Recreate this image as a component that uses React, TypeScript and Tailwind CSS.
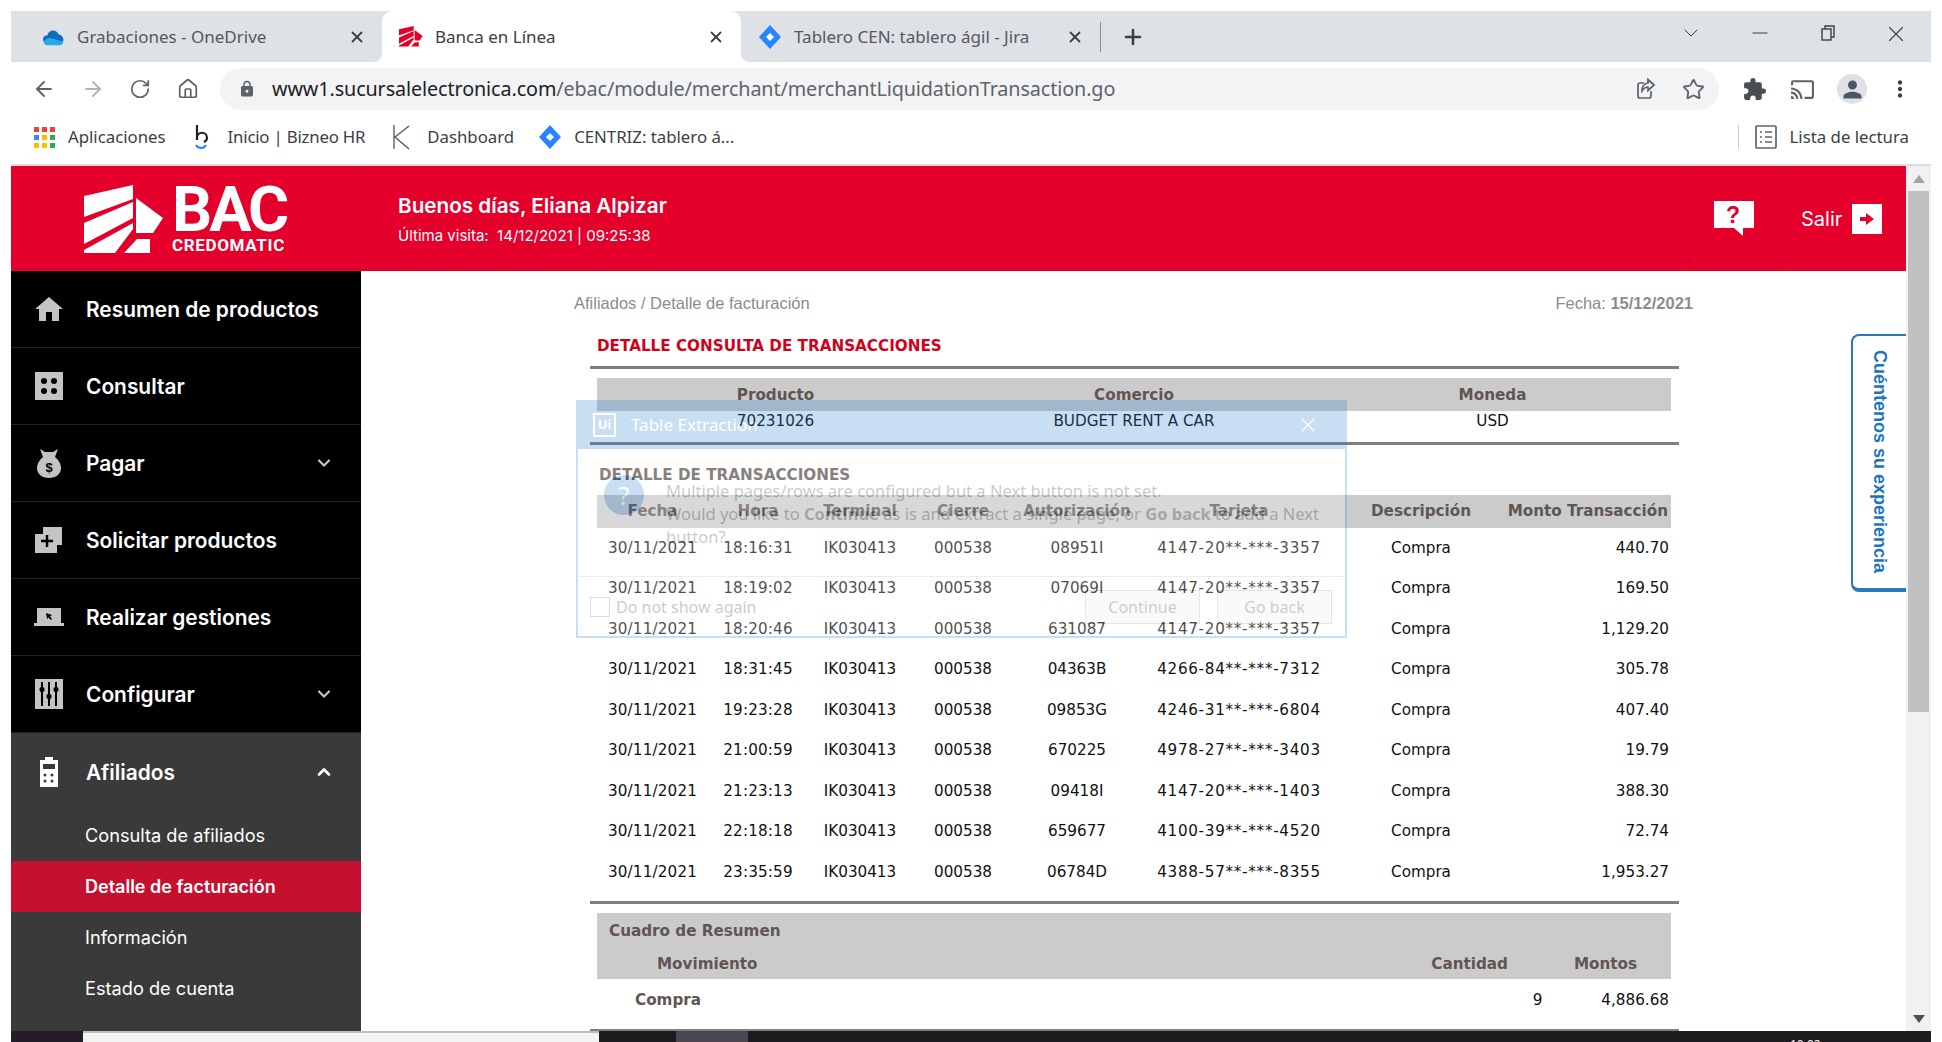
import { ArrowLeft, ArrowRight, ChevronDown, ChevronUp, Minus, Plus, RotateCw, Home, Star, X } from "lucide-react"
import { MdCast, MdExtension, MdLock, MdMoreVert, MdPerson } from "react-icons/md"
import type { ReactNode } from "react"

const transactions = [
  ["18:16:31", "08951I", "4147-20**-***-3357", "440.70"],
  ["18:19:02", "07069I", "4147-20**-***-3357", "169.50"],
  ["18:20:46", "631087", "4147-20**-***-3357", "1,129.20"],
  ["18:31:45", "04363B", "4266-84**-***-7312", "305.78"],
  ["19:23:28", "09853G", "4246-31**-***-6804", "407.40"],
  ["21:00:59", "670225", "4978-27**-***-3403", "19.79"],
  ["21:23:13", "09418I", "4147-20**-***-1403", "388.30"],
  ["22:18:18", "659677", "4100-39**-***-4520", "72.74"],
  ["23:35:59", "06784D", "4388-57**-***-8355", "1,953.27"],
]

const txGrid = "grid grid-cols-[111px_100px_104px_102px_126px_198px_166px_167px] w-[1074px]"

function JiraDiamond() {
  return (
    <svg width="24" height="24" viewBox="0 0 24 24">
      <path d="M12 0 23 12 12 24 1 12z" fill="#2684ff" />
      <path d="M12 8 16 12 12 16 8 12z" fill="#fff" />
    </svg>
  )
}

function BacMark({ size = 80, color = "#fff" }: { size?: number; color?: string }) {
  return (
    <svg width={size} height={size * 0.85} viewBox="0 0 80 68" fill={color}>
      <path d="M0 11 49 0V14L0 32z" />
      <path d="M0 38 49 17V33L0 59z" />
      <path d="M0 65 49 38V44L31 68H0z" />
      <path d="M52 13 79 33 69 48H52z" />
      <path d="M53 54H66V68H40z" />
    </svg>
  )
}

function Tab({ icon, title, width, pl, active }: { icon: ReactNode; title: string; width: string; pl: string; active?: boolean }) {
  return (
    <div className={`relative flex h-full items-center ${width} ${pl} pr-[16px] ${active ? "rounded-t-[10px] bg-white" : ""}`}>
      <span className="flex w-[24px] shrink-0 justify-center">{icon}</span>
      <span className={`ml-[12px] text-[17px] ${active ? "text-[#3c4043]" : "text-[#55585c]"}`}>{title}</span>
      <X className="ml-auto h-[18px] w-[18px] text-[#3c4043]" strokeWidth={2.4} />
      {active && (
        <>
          <span className="absolute bottom-0 left-[-8px] h-[8px] w-[8px] bg-white">
            <span className="block h-full w-full rounded-br-[8px] bg-[#dee1e6]" />
          </span>
          <span className="absolute bottom-0 right-[-8px] h-[8px] w-[8px] bg-white">
            <span className="block h-full w-full rounded-bl-[8px] bg-[#dee1e6]" />
          </span>
        </>
      )}
    </div>
  )
}

function TabStrip() {
  return (
    <div className="flex h-[51px] shrink-0 items-center bg-[#dee1e6] font-['Noto_Sans',sans-serif]">
      <Tab
        width="w-[371px]"
        pl="pl-[30px]"
        title="Grabaciones - OneDrive"
        icon={
          <svg width="26" height="24" viewBox="0 0 26 24">
            <path d="M3 17c-2-3 0-7 4-7 1-5 9-8 12-1 4 1 6 4 5 8z" fill="#0f6cbd" />
            <path d="M3 17c2-3 6-5 10-3l11 3c0 2-1 4-3 4H6c-2 0-3-2-3-4z" fill="#28a8ea" />
          </svg>
        }
      />
      <Tab width="w-[359px]" pl="pl-[17px]" title="Banca en Línea" active icon={<BacMark size={24} color="#e4002b" />} />
      <Tab width="w-[359px]" pl="pl-[17px]" title="Tablero CEN: tablero ágil - Jira" icon={<JiraDiamond />} />
      <div className="h-[30px] w-px bg-[#8a8d91]" />
      <Plus className="ml-[20px] h-[24px] w-[24px] text-[#3c4043]" strokeWidth={2.6} />
      <div className="ml-auto flex h-full items-start pt-[10px] text-[#3c4043]">
        <ChevronDown className="h-[24px] w-[24px]" strokeWidth={1} />
        <Minus className="ml-[45px] h-[24px] w-[24px]" strokeWidth={1.2} />
        <svg className="ml-[47px] mt-[3px]" width="18" height="18" viewBox="0 0 18 18" fill="none" stroke="currentColor" strokeWidth="1.4">
          <rect x="3" y="5" width="9" height="11" />
          <path d="M6 5V2h9v11h-3" />
        </svg>
        <X className="ml-[46px] mr-[22px] h-[26px] w-[26px]" strokeWidth={1} />
      </div>
    </div>
  )
}

function Toolbar() {
  return (
    <div className="flex h-[48px] shrink-0 items-center pt-[6px] font-['Noto_Sans',sans-serif] text-[#5f6368]">
      <ArrowLeft className="ml-[21px] h-[24px] w-[24px]" strokeWidth={1.8} />
      <ArrowRight className="ml-[25px] h-[24px] w-[24px] text-[#b0b3b7]" strokeWidth={1.8} />
      <RotateCw className="ml-[24px] h-[22px] w-[22px]" strokeWidth={1.9} />
      <Home className="ml-[26px] h-[22px] w-[22px]" strokeWidth={1.9} />
      <div className="ml-[21px] flex h-[42px] w-[1499px] items-center rounded-full bg-[#f1f3f4]">
        <MdLock className="ml-[18px] h-[18px] w-[18px]" />
        <span className="ml-[16px] text-[19.75px] tracking-[-0.1px]">
          <span className="text-[#202124]">www1.sucursalelectronica.com</span>/ebac/module/merchant/merchantLiquidationTransaction.go
        </span>
        <svg className="ml-auto" width="24" height="24" viewBox="0 0 24 24" fill="none" stroke="currentColor" strokeWidth="1.7">
          <path d="M17 14v5a2 2 0 0 1-2 2H6a2 2 0 0 1-2-2V8a2 2 0 0 1 2-2h4" />
          <path d="M20 8 14 2.5V6c-4 .5-6 3.5-6 8 2-3 3.500-4 6-4v3.500z" />
        </svg>
        <Star className="ml-[24px] mr-[14px] h-[23px] w-[23px]" strokeWidth={1.9} />
      </div>
      <MdExtension className="ml-[23px] h-[25px] w-[25px] text-[#4a4d51]" />
      <MdCast className="ml-[23px] h-[25px] w-[25px]" />
      <span className="ml-[22px] flex h-[30px] w-[30px] items-center justify-center rounded-full bg-[#dfe1e5]">
        <MdPerson className="h-[27px] w-[27px] text-[#4a5568]" />
      </span>
      <MdMoreVert className="ml-[20px] h-[26px] w-[26px] text-[#3c4043]" />
    </div>
  )
}

function BookmarksBar() {
  return (
    <div className="flex h-[54px] shrink-0 items-center font-['Noto_Sans',sans-serif] text-[16.8px] text-[#3c4043]">
      <svg className="ml-[23px]" width="21" height="21" viewBox="0 0 21 21">
        {["#ea4335", "#ea4335", "#ea4335", "#4285f4", "#fbbc04", "#34a853", "#fbbc04", "#fbbc04", "#34a853"].map((c, i) => (
          <rect key={i} x={(i % 3) * 8} y={Math.floor(i / 3) * 8} width="5" height="5" fill={c} />
        ))}
      </svg>
      <span className="ml-[13px]">Aplicaciones</span>
      <svg className="ml-[27px]" width="18" height="28" viewBox="0 0 18 28" fill="none">
        <path d="M4 2v15M4 15c0-7 10-7 10 0 0 2-1 3-3 4" stroke="#222" strokeWidth="2.200" />
        <path d="M3 22c2 4 8 4 10 0" stroke="#2684ff" strokeWidth="2" />
      </svg>
      <span className="ml-[17px] tracking-[-0.2px]">Inicio | Bizneo HR</span>
      <svg className="ml-[27px]" width="20" height="26" viewBox="0 0 20 26" fill="none" stroke="#555" strokeWidth="1.3">
        <path d="M2 1v24M17 2 3 13l14 12" />
      </svg>
      <span className="ml-[15px]">Dashboard</span>
      <span className="ml-[24px] flex">
        <JiraDiamond />
      </span>
      <span className="ml-[12px]">CENTRIZ: tablero á...</span>
      <div className="ml-auto h-[24px] w-px bg-[#c8cacd]" />
      <svg className="ml-[16px]" width="22" height="24" viewBox="0 0 22 24" fill="none" stroke="#5f6368" strokeWidth="1.700">
        <rect x="1" y="1" width="20" height="22" rx="1" />
        <path d="M5 7h2M10 7h7M5 12h2M10 12h7M5 17h2M10 17h7" />
      </svg>
      <span className="ml-[13px] mr-[22px]">Lista de lectura</span>
    </div>
  )
}

function Logo() {
  return (
    <div className="flex items-center pl-[73px]">
      <BacMark size={80} />
      <div className="ml-[8px] flex w-[114px] flex-col font-['Roboto',sans-serif] font-bold text-white">
        <span className="h-[50px] text-[63px] leading-[50px] tracking-[-3px]">BAC</span>
        <span className="mt-[3px] text-[17px] leading-[14px] tracking-[0.65px]">CREDOMATIC</span>
      </div>
    </div>
  )
}

function Header() {
  return (
    <header className="flex h-[105px] shrink-0 items-stretch bg-[#e4002b] text-white">
      <div className="flex w-[350px] items-center border-r border-[#d00028]">
        <Logo />
      </div>
      <div className="flex flex-col pl-[37px] pt-[27px] font-['Inter',sans-serif]">
        <span className="text-[20.7px] font-semibold leading-[26px]">Buenos días, Eliana Alpizar</span>
        <span className="mt-[7px] text-[15px] leading-[19px]">Última visita:&nbsp; 14/12/2021 | 09:25:38</span>
      </div>
      <div className="ml-auto flex w-[90px] items-center justify-center border-x border-[#d00028]">
        <svg width="40" height="35" viewBox="0 0 40 35">
          <path d="M0 0H40V27H29V35L20 27H0z" fill="#fff" />
          <text x="19" y="22" textAnchor="middle" fontFamily="Liberation Sans" fontWeight="700" fontSize="23" fill="#e4002b">?</text>
        </svg>
      </div>
      <div className="flex w-[127px] items-center pl-[22px] pt-[1px]">
        <span className="font-['Inter',sans-serif] text-[20px]">Salir</span>
        <span className="ml-[10px] flex h-[30px] w-[30px] items-center justify-center bg-white">
          <svg width="14" height="14" viewBox="0 0 14 14" fill="#e4002b">
            <path d="M0 5h6V1l8 6-8 6V9H0z" />
          </svg>
        </span>
      </div>
    </header>
  )
}

const c = "#c4c4c4"

const navItems: { label: string; icon: ReactNode; chevron?: boolean }[] = [
  {
    label: "Resumen de productos",
    icon: (
      <svg width="28" height="24" viewBox="0 0 28 24" fill={c}>
        <path d="M14 0 28 12H24V24H17V15H11V24H4V12H0z" />
      </svg>
    ),
  },
  {
    label: "Consultar",
    icon: (
      <svg width="28" height="28" viewBox="0 0 28 28">
        <rect width="28" height="28" fill={c} />
        <circle cx="9" cy="9" r="3" fill="#000" />
        <circle cx="19" cy="9" r="3" fill="#000" />
        <circle cx="9" cy="19" r="3" fill="#000" />
        <circle cx="19" cy="19" r="3" fill="#000" />
      </svg>
    ),
  },
  {
    label: "Pagar",
    chevron: true,
    icon: (
      <svg width="24" height="29" viewBox="0 0 24 29">
        <path d="M3 0 8 3H16L21 0 18 8C22 11 24 15 24 19 24 25 19 29 12 29 5 29 0 25 0 19 0 15 2 11 6 8z" fill={c} />
        <text x="12" y="23" textAnchor="middle" fontFamily="Liberation Sans" fontWeight="700" fontSize="13" fill="#000">$</text>
      </svg>
    ),
  },
  {
    label: "Solicitar productos",
    icon: (
      <svg width="28" height="26" viewBox="0 0 28 26">
        <path d="M8 0H27V18H22V26H0V7H8z" fill={c} />
        <path d="M12 8V20M6 14H18" stroke="#000" strokeWidth="2.500" />
      </svg>
    ),
  },
  {
    label: "Realizar gestiones",
    icon: (
      <svg width="30" height="18" viewBox="0 0 30 18">
        <path d="M3 0H27V15H30V18H0V15H3z" fill={c} />
        <path d="M12 5 18 7 16 8.500 18 11 17 12 14.500 9.500 13 11z" fill="#000" />
      </svg>
    ),
  },
  {
    label: "Configurar",
    chevron: true,
    icon: (
      <svg width="28" height="30" viewBox="0 0 28 30">
        <rect width="28" height="30" fill={c} />
        <path d="M7 3V27M14 3V27M21 3V27" stroke="#000" strokeWidth="2" />
        <rect x="4.500" y="8" width="5" height="5" rx="2" fill="#000" />
        <rect x="11.500" y="15" width="5" height="5" rx="2" fill="#000" />
        <rect x="18.500" y="8" width="5" height="5" rx="2" fill="#000" />
      </svg>
    ),
  },
]

function Sidebar() {
  return (
    <nav className="flex w-[350px] shrink-0 flex-col bg-[#3a3a3a] font-['Inter',sans-serif] shadow-[2px_0_4px_rgba(0,0,0,0.15)]">
      {navItems.map(({ label, icon, chevron }) => (
        <div key={label} className="flex h-[77px] items-center border-b border-[#222222] bg-black text-white">
          <span className="flex w-[75px] shrink-0 justify-center">{icon}</span>
          <span className="pt-[2px] text-[20.9px] font-semibold">{label}</span>
          {chevron && <ChevronDown className="ml-auto mr-[27px] h-[20px] w-[20px] text-[#c4c4c4]" strokeWidth={2.6} />}
        </div>
      ))}
      <div className="flex h-[77px] items-center text-white">
        <span className="flex w-[75px] shrink-0 justify-center">
          <svg width="20" height="30" viewBox="0 0 20 30" fill="#fff">
            <path d="M6 0H14V3H19V30H1V3H6z" />
            <rect x="4" y="7" width="12" height="5" fill="#3a3a3a" />
            <circle cx="6" cy="18" r="1.500" fill="#3a3a3a" />
            <circle cx="13" cy="18" r="1.500" fill="#3a3a3a" />
            <circle cx="6" cy="24" r="1.500" fill="#3a3a3a" />
            <circle cx="13" cy="24" r="1.500" fill="#3a3a3a" />
          </svg>
        </span>
        <span className="pt-[2px] text-[20.9px] font-semibold">Afiliados</span>
        <ChevronUp className="ml-auto mr-[27px] h-[20px] w-[20px]" strokeWidth={3.2} />
      </div>
      <div className="flex h-[51px] items-center pl-[74px] text-[18.2px] text-white">Consulta de afiliados</div>
      <div className="flex h-[51px] items-center bg-[#c5112f] pl-[74px] text-[18px] font-semibold text-white">Detalle de facturación</div>
      <div className="flex h-[51px] items-center pl-[74px] text-[18.2px] text-white">Información</div>
      <div className="flex h-[51px] items-center pl-[74px] text-[18.2px] text-white">Estado de cuenta</div>
    </nav>
  )
}

function Rule() {
  return <div className="h-[3px] w-[1089px] shrink-0 bg-[#7f7f7f]" />
}

function Report() {
  return (
    <div className="ml-[213px] flex w-[1119px] flex-col font-['DejaVu_Sans',sans-serif] text-[15.2px] text-[#111]">
      <div className="flex h-[64px] items-center justify-between pt-[1px] font-['Liberation_Sans',sans-serif] text-[16.5px] text-[#8c8c8c]">
        <span>Afiliados / Detalle de facturación</span>
        <span>
          Fecha: <b className="font-bold">15/12/2021</b>
        </span>
      </div>
      <div className="ml-[16px] flex flex-col">
        <h2 className="ml-[7px] h-[31px] pt-[1px] text-[15.2px] font-bold leading-[20px] text-[#d0021b]">DETALLE CONSULTA DE TRANSACCIONES</h2>
        <Rule />
        <div className="ml-[7px] mt-[9px] grid h-[33px] w-[1074px] grid-cols-[357px_360px_357px] items-center bg-[#cbcbcb] pt-[2px] text-center font-bold text-[#5f5652]">
          <span>Producto</span>
          <span>Comercio</span>
          <span>Moneda</span>
        </div>
        <div className="ml-[7px] grid h-[31px] w-[1074px] grid-cols-[357px_360px_357px] items-start pt-[1px] text-center leading-[19px]">
          <span>70231026</span>
          <span>BUDGET RENT A CAR</span>
          <span>USD</span>
        </div>
        <Rule />
        <h3 className="ml-[9px] mt-[21px] h-[29px] font-bold leading-[18px] text-[#5f5652]">DETALLE DE TRANSACCIONES</h3>
        <div className={`${txGrid} ml-[7px] h-[33px] items-center bg-[#cbcbcb] text-center font-bold text-[#5f5652]`}>
          <span>Fecha</span>
          <span>Hora</span>
          <span>Terminal</span>
          <span>Cierre</span>
          <span>Autorización</span>
          <span>Tarjeta</span>
          <span>Descripción</span>
          <span className="pr-[3px] text-right">Monto Transacción</span>
        </div>
        {transactions.map(([time, auth, card, amount]) => (
          <div key={time} className={`${txGrid} ml-[7px] h-[40.5px] items-center text-center`}>
            <span className="tracking-[0.15px]">30/11/2021</span>
            <span className="tracking-[0.15px]">{time}</span>
            <span>IK030413</span>
            <span>000538</span>
            <span>{auth}</span>
            <span className="tracking-[0.7px]">{card}</span>
            <span>Compra</span>
            <span className="pr-[2px] text-right">{amount}</span>
          </div>
        ))}
        <div className="mt-[8.5px]">
          <Rule />
        </div>
        <div className="ml-[7px] mt-[9px] flex h-[66px] w-[1074px] flex-col bg-[#cbcbcb] font-bold text-[#5f5652]">
          <span className="mt-[8px] pl-[12px] leading-[20px]">Cuadro de Resumen</span>
          <div className="mt-[13px] flex leading-[20px]">
            <span className="pl-[60px]">Movimiento</span>
            <span className="ml-auto">Cantidad</span>
            <span className="ml-[66px] mr-[34px]">Montos</span>
          </div>
        </div>
        <div className="ml-[7px] flex h-[50px] w-[1074px] items-center pb-[8px]">
          <span className="pl-[38px] font-bold text-[#5f5652]">Compra</span>
          <span className="ml-auto">9</span>
          <span className="ml-[59px] mr-[2px]">4,886.68</span>
        </div>
        <Rule />
      </div>
    </div>
  )
}

function TableExtractionDialog() {
  return (
    <div className="absolute left-[565px] top-[129px] flex h-[238px] w-[771px] flex-col border-[2px] border-t-0 border-[#277fcf] bg-white font-['Noto_Sans',sans-serif] text-[16px] text-[#333] opacity-25">
      <div className="flex h-[49px] shrink-0 items-center bg-[#277fcf] pl-[15px] pr-[25px] text-white">
        <span className="flex h-[24px] w-[23px] items-center justify-center border-[2px] border-white text-[13px] font-bold">Ui</span>
        <span className="ml-[15px] text-[17px]">Table Extraction</span>
        <X className="ml-auto h-[24px] w-[24px]" strokeWidth={1.3} />
      </div>
      <div className="flex h-[128px] shrink-0 items-start border-b border-[#bbb] pl-[26px] pt-[26px]">
        <span className="flex h-[40px] w-[40px] shrink-0 items-center justify-center rounded-full bg-[#277fcf] text-[26px] text-white">?</span>
        <p className="ml-[22px] mt-[4px] w-[680px] text-[16.5px] leading-[23px]">
          Multiple pages/rows are configured but a Next button is not set.
          <br />
          Would you like to <b>Continue</b> as is and extract a single page, or <b>Go back</b> to add a Next button?
        </p>
      </div>
      <div className="flex flex-1 items-center pl-[12px] pr-[13px]">
        <span className="h-[20px] w-[20px] border border-[#777]" />
        <span className="ml-[6px]">Do not show again</span>
        <span className="ml-auto flex h-[34px] w-[115px] items-center justify-center border border-[#999] bg-[#eee]">Continue</span>
        <span className="ml-[17px] flex h-[34px] w-[115px] items-center justify-center border border-[#999] bg-[#eee]">Go back</span>
      </div>
    </div>
  )
}

function FeedbackTab() {
  return (
    <div className="absolute right-0 top-[63px] flex h-[258px] w-[55px] items-center justify-center rounded-l-[8px] border-y-[2px] border-l-[2px] border-b-[4px] border-[#2a7ab8] bg-white">
      <span className="font-['Liberation_Sans',sans-serif] text-[18px] font-bold text-[#1b75bc] [writing-mode:vertical-rl]">Cuéntenos su experiencia</span>
    </div>
  )
}

function Scrollbar() {
  return (
    <div className="flex w-[25px] shrink-0 flex-col items-center bg-[#f1f1f1]">
      <svg className="mt-[9px]" width="12" height="8" viewBox="0 0 12 8" fill="#a3a3a3">
        <path d="M6 0 12 8H0z" />
      </svg>
      <div className="mt-[8px] h-[521px] w-[21px] bg-[#c1c1c1]" />
      <svg className="mt-auto mb-[8px]" width="12" height="8" viewBox="0 0 12 8" fill="#505050">
        <path d="M0 0H12L6 8z" />
      </svg>
    </div>
  )
}

function TaskbarPeek() {
  return (
    <div className="flex h-[11px] shrink-0 overflow-hidden bg-[#1d1a20]">
      <div className="w-[72px] shrink-0 bg-[#241c28]" />
      <div className="w-[516px] shrink-0 border-t-[2px] border-[#bdbdbd] bg-[#f3f3f3]" />
      <div className="ml-[77px] w-[72px] shrink-0 bg-[#4c4650]" />
      <span className="ml-[1042px] mt-[7px] font-['Noto_Sans',sans-serif] text-[12px] leading-[14px] text-white">10:02</span>
    </div>
  )
}

export default function App() {
  return (
    <div className="flex h-[1042px] w-[1942px] flex-col overflow-hidden bg-white px-[11px] pt-[11px]">
      <TabStrip />
      <Toolbar />
      <BookmarksBar />
      <div className="h-[2px] shrink-0 bg-[#dcdcdc]" />
      <div className="flex min-h-0 flex-1">
        <div className="flex min-w-0 flex-1 flex-col">
          <Header />
          <div className="relative flex min-h-0 flex-1 overflow-hidden">
            <Sidebar />
            <main className="min-w-0 flex-1 overflow-hidden bg-white">
              <Report />
            </main>
            <TableExtractionDialog />
            <FeedbackTab />
          </div>
        </div>
        <Scrollbar />
      </div>
      <TaskbarPeek />
    </div>
  )
}
